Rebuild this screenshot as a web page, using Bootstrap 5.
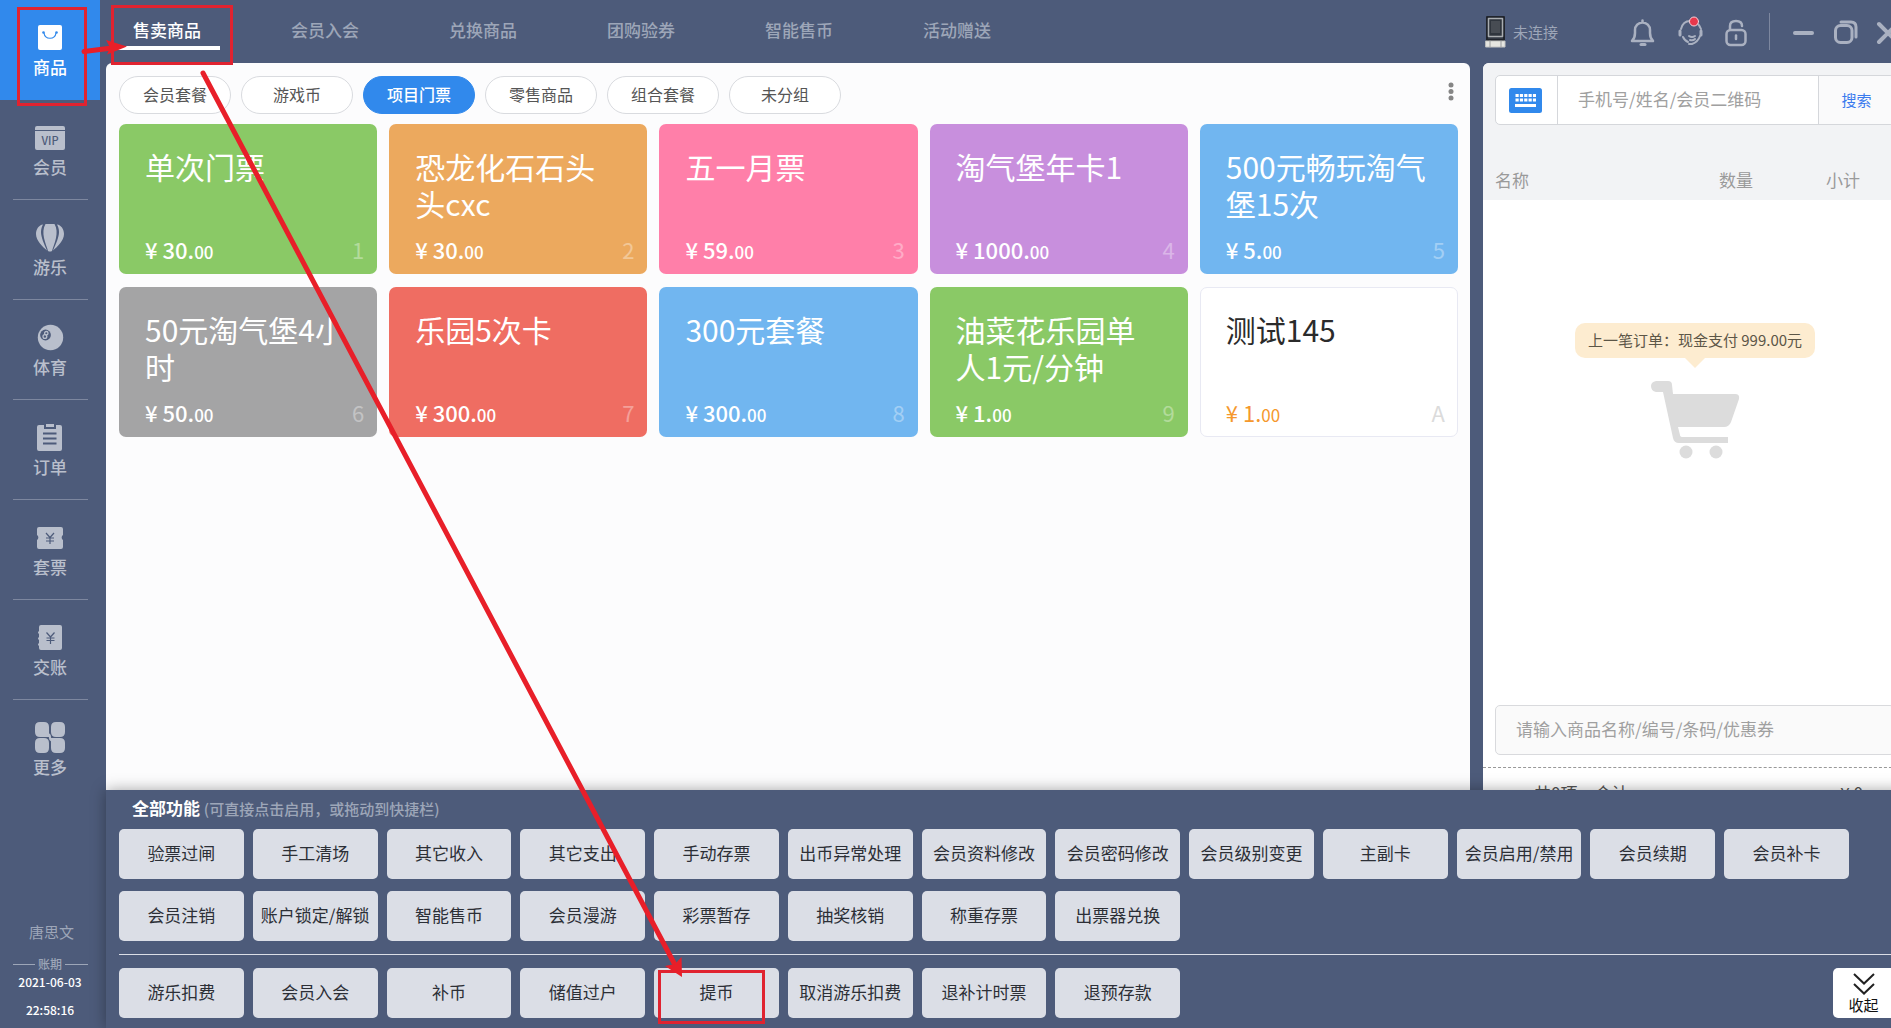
<!DOCTYPE html>
<html lang="zh-CN">
<head>
<meta charset="utf-8">
<meta name="viewport" content="width=device-width, initial-scale=1">
<title>售卖商品</title>
<link href="https://cdn.jsdelivr.net/npm/bootstrap@5.3.0/dist/css/bootstrap.min.css" rel="stylesheet">
<style>
:root{--navy:#4d5b7a;--brand:#3189ec;--mute:#b9bfcc;--dim:#9da6b8}
body{font-family:"Noto Sans CJK SC",sans-serif;font-size:17px;line-height:24px;background:var(--navy);overflow:hidden}
button{font-family:inherit}
.app-shell{width:calc(100% + 16px);height:100vh}
.side-bar{width:100px;color:var(--mute)}
.side-link{height:100px;padding-top:24px;color:var(--mute);text-decoration:none;gap:3px;font-weight:500}
.side-link svg{width:32px;height:28px;fill:currentColor}
.side-link+.side-link::after{content:"";width:75px;height:1px;background:#7d879f;margin-top:auto}
.side-link:last-child::after{visibility:hidden}
.side-link.current{background:var(--brand);color:#fff}
.side-foot{font-weight:500;padding-bottom:8px}
.user-name{font-size:15px;color:var(--dim);font-weight:400;padding-left:3px;margin-bottom:12px}
.period{width:75px;gap:3px;font-size:12px;line-height:16px;color:var(--dim)}
.period::before,.period::after{content:"";flex:1;height:1px;background:var(--dim)}
.shift-date,.shift-time{line-height:20px;font-size:12px;color:#fff}
.shift-time{margin-top:8px}
.main-col{padding-left:6px}
.top-bar{height:63px}
.tab-row{gap:52px;padding:13px 0 0 8px}
.tab-row .nav-link{width:106px;height:37px;padding:5px 0 0;color:var(--dim);text-align:center;border-bottom:4px solid transparent;font-weight:500}
.tab-row .nav-link.active{color:#fff;border-color:#fff}
.status-area{width:424px;padding:4px 6px 4px 2px;color:var(--dim)}
.status-area svg{fill:none;stroke:#aab1c1;stroke-width:3;stroke-linecap:round;stroke-linejoin:round}
.status-text{font-size:15px;margin-left:7px}
.tool-icons{gap:19px}
.win-icons{gap:14px}
.icon-btn{border:0;background:none;padding:0;width:28px;height:32px;line-height:0}
.v-rule{width:1px;height:37px;background:#7d879f}
.work-area{gap:13px}
.goods-pane{background:#fcfcfd;border-radius:6px 6px 0 0;padding:13px 12px 0 13px}
.pill-row{gap:10px;margin-bottom:10px}
.pill{width:112px;height:38px;border:1px solid #d9dbdf;border-radius:19px;background:#fff;color:#555;font-size:16px;padding:0 0 3px}
.pill.on{background:var(--brand);border-color:var(--brand);color:#fff;font-weight:500}
.more-btn{width:20px;height:32px;border:0;background:none;padding:0;margin-right:-3px}
.goods-grid{display:grid;grid-template-columns:repeat(5,1fr);gap:13px 12px}
.goods{height:150px;border:0;border-radius:7px;color:#fff;text-align:left;padding:24px 13px 8px 26px}
.goods-name{font-size:30px;line-height:37px;padding-right:14px;overflow-wrap:anywhere}
.price{font-size:22px;line-height:28px;font-weight:500}
.price span{font-size:17px}
.hot-key{font-size:22px;line-height:28px;opacity:.35}
.g-green{background:#8ac966}.g-orange{background:#eca95e}.g-pink{background:#ff7fa9}.g-purple{background:#c88fdd}.g-blue{background:#71b6f0}.g-grey{background:#a4a4a5}.g-red{background:#ef6d62}
.g-plain{background:#fff;border:1px solid #e8e9f3;color:#2b2b2b;padding:23px 12px 7px 25px}
.g-plain .price{color:#f5982c;font-weight:400}
.g-plain .hot-key{color:#999}
.cart-pane{width:424px;background:#fff;border-radius:6px 6px 0 0}
.cart-head{background:#f2f3f5;height:137px;padding:12px 12px 0;border-radius:6px 6px 0 0}
.find-box{height:50px;border:1px solid #d5d7db;border-radius:5px;background:#fff}
.kbd-btn{width:62px;border:0;border-right:1px solid #d5d7db;background:none;padding:0 2px 0 0}
.find-box input{border:0;min-width:0;padding:0 20px 2px;background:none;outline:0}
::placeholder{color:#a0a0a0;opacity:1}
.find-btn{width:76px;border:0;border-left:1px solid #d5d7db;background:#fafafb;color:#3a7bee;font-size:15px;border-radius:0 5px 5px 0}
.cart-table{margin-top:43px;color:#9a9a9a}
.cart-table th{font-weight:400;padding:0}
.c-num{width:107px}.c-sum{width:69px}
.tip{margin-top:123px;background:#fdecd0;border-radius:10px;width:240px;height:35px;line-height:33px;font-size:15px;color:#5c5647;position:relative}
.tip::after{content:"";position:absolute;left:110px;top:35px;border:10px solid transparent;border-top-color:#fdecd0;border-bottom:0}
.cart-svg{margin-top:22px}
.item-input{margin:0 12px;height:50px;border:1px solid #d9dadd;border-radius:5px;background:#fafafa;padding:0 20px 3px}
.cart-bottom{margin-top:12px;border-top:1px dashed #999;padding:13px 44px 0 51px;color:#555;height:261px}
.drawer{left:106px;right:0;bottom:0;background:var(--navy);box-shadow:0 0 14px rgba(0,0,0,.35);padding:6px 0 10px 13px}
.drawer-title{padding-left:13px;margin-bottom:8px;color:#fff;font-weight:700}
.drawer-title span{font-size:15px;color:var(--dim);font-weight:500}
.fn-grid{display:grid;grid-template-columns:repeat(13,1fr);gap:12px 9px;padding-right:58px}
.fn{height:50px;border:0;border-radius:5px;background:#dbdee6;color:#2c2f36;padding:0 0 3px;white-space:nowrap}
.drawer-rule{height:1px;background:#dbdee6;margin:13px 0}
.fold-btn{right:0;bottom:10px;width:74px;height:50px;border:0;border-radius:5px 0 0 5px;background:#fff;padding:5px 13px 0 0;font-size:15px;line-height:20px;color:#111}
.guide{left:0;top:0;pointer-events:none;z-index:5}
</style>
<script src="https://cdn.jsdelivr.net/npm/bootstrap@5.3.0/dist/js/bootstrap.bundle.min.js"></script>
</head>
<body>
<div class="app-shell d-flex position-relative">
  <aside class="side-bar d-flex flex-column flex-shrink-0">
    <nav class="d-flex flex-column">
      <a href="#" class="side-link current d-flex flex-column align-items-center"><svg viewBox="0 0 32 28"><rect x="4" y="1" width="24" height="25" rx="2"/><path d="M10 9c1 7 11 7 12 0" fill="none" stroke="#3189ec" stroke-width="1.200"/><circle cx="9.500" cy="8.500" r="1.300" fill="#3189ec"/><circle cx="22.500" cy="8.500" r="1.300" fill="#3189ec"/></svg>商品</a>
      <a href="#" class="side-link d-flex flex-column align-items-center"><svg viewBox="0 0 32 28"><path d="M3 2h26q2 0 2 2v2H1V4q0-2 2-2zM1 7h30v17q0 2-2 2H3q-2 0-2-2z"/><text x="16" y="20.500" text-anchor="middle" font-size="11" fill="#4d5b7a">VIP</text></svg>会员</a>
      <a href="#" class="side-link d-flex flex-column align-items-center"><svg viewBox="0 0 32 28"><path d="M9 .5C5 1 2 5 2 10c0 7 7 13 11 16.500C10 20 7 13 7 8c0-3 1-6 2-7.500zM23 .5c4 .5 7 4.500 7 9.500 0 7-7 13-11 16.500C22 20 25 13 25 8c0-3-1-6-2-7.500zM11.500 0h9C23 4 23 9 22 14c-1 5-3 9-4 13q-2 1-4 0c-1-4-3-8-4-13C9 9 9 4 11.500 0z"/></svg>游乐</a>
      <a href="#" class="side-link d-flex flex-column align-items-center"><svg viewBox="0 0 32 28"><circle cx="16.500" cy="13.500" r="12.700"/><circle cx="11.500" cy="11" r="5.400" fill="#4d5b7a"/><g fill="none" stroke="#b9bfcc" stroke-width="1.300"><circle cx="12.300" cy="9.200" r="1.700"/><circle cx="10.900" cy="12.500" r="1.900"/></g></svg>体育</a>
      <a href="#" class="side-link d-flex flex-column align-items-center"><svg viewBox="0 0 32 28"><path d="M12 0h8v3h-8zM5 1h5v4h12V1h4q2 0 2 2v22q0 2-2 2H5q-2 0-2-2V3q0-2 2-2z"/><path d="M9 9.500h13.500M9 14.500h13.500M9 19.500h13.500" stroke="#4d5b7a" stroke-width="2"/></svg>订单</a>
      <a href="#" class="side-link d-flex flex-column align-items-center"><svg viewBox="0 0 32 28"><path d="M5 3h22q2 0 2 2v6a3 3 0 0 0 0 5v7q0 2-2 2H5q-2 0-2-2v-7a3 3 0 0 0 0-5V5q0-2 2-2z"/><path d="M12 9l4 4.500L20 9M12 14h8M12 17h8M16 13.500V20" fill="none" stroke="#4d5b7a" stroke-width="1.200"/></svg>套票</a>
      <a href="#" class="side-link d-flex flex-column align-items-center"><svg viewBox="0 0 32 28"><path d="M7 1h19q2 0 2 2v21q0 2-2 2H7q-2 0-2-2v-2q-2-1.500 0-3v-3q-2-1.500 0-3v-3q-2-1.500 0-3V3q0-2 2-2z"/><path d="M12.500 8.500l4 4.500 4-4.500M12.500 14h8M12.500 16.500h8M16.500 13v7" fill="none" stroke="#4d5b7a" stroke-width="1.200"/></svg>交账</a>
      <a href="#" class="side-link d-flex flex-column align-items-center"><svg viewBox="0 0 32 28" overflow="visible"><path d="M6 -2h4q5 0 5 5v10H6q-5 0-5-5V3q0-5 5-5zM26 13h-4q-5 0-5-5V3q0-5 5-5h4q5 0 5 5v5q0 5-5 5zM6 14h4q5 0 5 5v5q0 5-5 5H6q-5 0-5-5v-5q0-5 5-5zM17 14h9q5 0 5 5v5q0 5-5 5h-4q-5 0-5-5z"/><path d="M12 11q3 0 3 3 0 3 4 4l1-2q-3 0-3-3 0-4-4-4z"/></svg>更多</a>
    </nav>
    <div class="side-foot d-flex flex-column align-items-center mt-auto">
      <div class="user-name">唐思文</div>
      <div class="period d-flex align-items-center">账期</div>
      <div class="shift-date">2021-06-03</div>
      <div class="shift-time">22:58:16</div>
    </div>
  </aside>

  <div class="main-col d-flex flex-column flex-grow-1">
    <header class="top-bar d-flex justify-content-between flex-shrink-0">
      <nav class="tab-row nav flex-nowrap align-items-start">
        <a class="nav-link active" href="#">售卖商品</a>
        <a class="nav-link" href="#">会员入会</a>
        <a class="nav-link" href="#">兑换商品</a>
        <a class="nav-link" href="#">团购验券</a>
        <a class="nav-link" href="#">智能售币</a>
        <a class="nav-link" href="#">活动赠送</a>
      </nav>
      <div class="status-area d-flex align-items-center">
        <svg width="21" height="32" viewBox="0 0 21 32"><path d="M2 1h17v23H2z" fill="#343a44" stroke="#20242c" stroke-width="2"/><path d="M3.500 2.500h14v18h-14z" fill="#2f353d" stroke="#a9adb0" stroke-width="1.500"/><path d="M6 5h9v12H6z" fill="#474c53" stroke="none"/><path d="M1 25h19v6H1z" fill="#e6e6e1" stroke="#c4c5c3" stroke-width="1"/><path d="M5 25v6M16 25v6" stroke="#9a9c9e" stroke-width="1"/></svg>
        <span class="status-text">未连接</span>
        <div class="tool-icons d-flex align-items-center ms-auto">
          <button class="icon-btn" aria-label="通知"><svg width="28" height="32" viewBox="0 0 28 32"><path d="M4 25q3-3 3-8v-3a7.500 7.500 0 0 1 15 0v3q0 5 3 8zM14.500 6V4.500" stroke-width="2.500"/><path d="M13 28.500h4"/></svg></button>
          <button class="icon-btn" aria-label="客服"><svg width="28" height="32" viewBox="0 0 28 32"><path d="M6 13q2-8 9-8 8 0 11 8" stroke-width="2"/><path d="M5 15v4M26 15v4" stroke-width="3"/><path d="M8 21q2 4 5 5M25 20q-2 6-8 8h-3M14 20q3 2 6 0M15 24q3 1 5-1" stroke-width="2"/><circle cx="19" cy="5.500" r="4.500" fill="#e8384c" stroke="#f4d5dc" stroke-width="1"/></svg></button>
          <button class="icon-btn" aria-label="锁定"><svg width="28" height="32" viewBox="0 0 28 32"><rect x="4.500" y="14" width="19" height="15" rx="4" stroke-width="2.500"/><path d="M8 13v-3q0-5 6-5t6 5" stroke-width="2.500"/><path d="M14 19.500v3.500" stroke-width="2.500"/></svg></button>
          <span class="v-rule"></span>
          <div class="win-icons d-flex">
            <button class="icon-btn" aria-label="最小化"><svg width="28" height="32" viewBox="0 0 28 32"><path d="M6 17h17" stroke-width="4"/></svg></button>
            <button class="icon-btn" aria-label="还原"><svg width="28" height="32" viewBox="0 0 28 32"><rect x="4.500" y="9.500" width="16.500" height="17" rx="5"/><path d="M10 6h10q5 0 5 5v10" /></svg></button>
            <button class="icon-btn" aria-label="关闭"><svg width="28" height="32" viewBox="0 0 28 32"><path d="M6 8l18 18M24 8L6 26" stroke-width="4"/></svg></button>
          </div>
        </div>
      </div>
    </header>

    <div class="work-area d-flex flex-grow-1">
      <main class="goods-pane flex-grow-1">
        <div class="pill-row d-flex align-items-start">
          <button class="pill">会员套餐</button>
          <button class="pill">游戏币</button>
          <button class="pill on">项目门票</button>
          <button class="pill">零售商品</button>
          <button class="pill">组合套餐</button>
          <button class="pill">未分组</button>
          <button class="more-btn ms-auto" aria-label="更多"><svg width="20" height="32" viewBox="0 0 20 32" fill="#858585"><circle cx="10" cy="9" r="2.500"/><circle cx="10" cy="15.500" r="2.500"/><circle cx="10" cy="22" r="2.500"/></svg></button>
        </div>
        <div class="goods-grid">
          <button class="goods g-green d-flex flex-column"><span class="goods-name">单次门票</span><span class="d-flex w-100 justify-content-between mt-auto"><span class="price">¥ 30.<span>00</span></span><span class="hot-key">1</span></span></button>
          <button class="goods g-orange d-flex flex-column"><span class="goods-name">恐龙化石石头头cxc</span><span class="d-flex w-100 justify-content-between mt-auto"><span class="price">¥ 30.<span>00</span></span><span class="hot-key">2</span></span></button>
          <button class="goods g-pink d-flex flex-column"><span class="goods-name">五一月票</span><span class="d-flex w-100 justify-content-between mt-auto"><span class="price">¥ 59.<span>00</span></span><span class="hot-key">3</span></span></button>
          <button class="goods g-purple d-flex flex-column"><span class="goods-name">淘气堡年卡1</span><span class="d-flex w-100 justify-content-between mt-auto"><span class="price">¥ 1000.<span>00</span></span><span class="hot-key">4</span></span></button>
          <button class="goods g-blue d-flex flex-column"><span class="goods-name">500元畅玩淘气堡15次</span><span class="d-flex w-100 justify-content-between mt-auto"><span class="price">¥ 5.<span>00</span></span><span class="hot-key">5</span></span></button>
          <button class="goods g-grey d-flex flex-column"><span class="goods-name">50元淘气堡4小时</span><span class="d-flex w-100 justify-content-between mt-auto"><span class="price">¥ 50.<span>00</span></span><span class="hot-key">6</span></span></button>
          <button class="goods g-red d-flex flex-column"><span class="goods-name">乐园5次卡</span><span class="d-flex w-100 justify-content-between mt-auto"><span class="price">¥ 300.<span>00</span></span><span class="hot-key">7</span></span></button>
          <button class="goods g-blue d-flex flex-column"><span class="goods-name">300元套餐</span><span class="d-flex w-100 justify-content-between mt-auto"><span class="price">¥ 300.<span>00</span></span><span class="hot-key">8</span></span></button>
          <button class="goods g-green d-flex flex-column"><span class="goods-name">油菜花乐园单人1元/分钟</span><span class="d-flex w-100 justify-content-between mt-auto"><span class="price">¥ 1.<span>00</span></span><span class="hot-key">9</span></span></button>
          <button class="goods g-plain d-flex flex-column"><span class="goods-name">测试145</span><span class="d-flex w-100 justify-content-between mt-auto"><span class="price">¥ 1.<span>00</span></span><span class="hot-key">A</span></span></button>
        </div>
      </main>

      <section class="cart-pane d-flex flex-column flex-shrink-0">
        <div class="cart-head flex-shrink-0">
          <div class="find-box d-flex">
            <button class="kbd-btn" aria-label="键盘"><svg width="33" height="25" viewBox="0 0 33 25"><rect width="33" height="25" rx="2.500" fill="#3189ec"/><path d="M6.500 7.500h20.500M6.500 12h20.500" stroke="#fff" stroke-width="3" stroke-dasharray="3.200 1.150"/><path d="M6 17.500h21" stroke="#fff" stroke-width="3"/></svg></button>
            <input class="flex-grow-1" type="text" aria-label="会员查询" placeholder="手机号/姓名/会员二维码">
            <button class="find-btn">搜索</button>
          </div>
          <table class="cart-table w-100"><thead><tr><th scope="col">名称</th><th scope="col" class="c-num">数量</th><th scope="col" class="c-sum">小计</th></tr></thead></table>
        </div>
        <div class="tip align-self-center text-center">上一笔订单：现金支付 999.00元</div>
        <svg class="cart-svg align-self-center" width="90" height="80" viewBox="0 0 90 80" fill="#dcdcdc"><path d="M6 1h12q4 0 4 4l1 9h62q5 0 4 5l-8 23q-2 5-7 5H28l2 8q0 2 3 2h45v6H29q-5 0-6-5L13 12H6Q1 11 1 6q0-4 5-5z"/><circle cx="36" cy="72" r="6.500"/><circle cx="66" cy="72" r="6.500"/></svg>
        <input class="item-input mt-auto flex-shrink-0" type="text" aria-label="商品查询" placeholder="请输入商品名称/编号/条码/优惠券">
        <div class="cart-bottom d-flex justify-content-between flex-shrink-0"><span>共0项，合计</span><span>¥ 0</span></div>
      </section>
    </div>
  </div>

  <section class="drawer position-absolute">
    <div class="drawer-title">全部功能 <span>(可直接点击启用，或拖动到快捷栏)</span></div>
    <div class="fn-grid">
      <button class="fn">验票过闸</button><button class="fn">手工清场</button><button class="fn">其它收入</button><button class="fn">其它支出</button><button class="fn">手动存票</button><button class="fn">出币异常处理</button><button class="fn">会员资料修改</button><button class="fn">会员密码修改</button><button class="fn">会员级别变更</button><button class="fn">主副卡</button><button class="fn">会员启用/禁用</button><button class="fn">会员续期</button><button class="fn">会员补卡</button>
      <button class="fn">会员注销</button><button class="fn">账户锁定/解锁</button><button class="fn">智能售币</button><button class="fn">会员漫游</button><button class="fn">彩票暂存</button><button class="fn">抽奖核销</button><button class="fn">称重存票</button><button class="fn">出票器兑换</button>
    </div>
    <div class="drawer-rule"></div>
    <div class="fn-grid">
      <button class="fn">游乐扣费</button><button class="fn">会员入会</button><button class="fn">补币</button><button class="fn">储值过户</button><button class="fn">提币</button><button class="fn">取消游乐扣费</button><button class="fn">退补计时票</button><button class="fn">退预存款</button>
    </div>
    <button class="fold-btn position-absolute d-flex flex-column align-items-center"><svg class="flex-shrink-0" width="22" height="22" viewBox="0 0 22 22" fill="none" stroke="#222" stroke-width="2"><path d="M1 1l10 9.500L21 1M1 11l10 9.500L21 11"/></svg><span>收起</span></button>
  </section>

  <svg class="guide position-absolute" width="1891" height="1028" viewBox="0 0 1891 1028" fill="none" stroke="#e02330" stroke-width="3">
    <rect x="18.500" y="8.500" width="67" height="96"/>
    <rect x="112.500" y="6.500" width="119" height="57"/>
    <rect x="659.500" y="971.500" width="104" height="51"/>
    <g stroke="#e81f29" stroke-width="5" stroke-linecap="round"><path d="M84 51.500L112 48M203 73L674 963"/></g>
    <path d="M127 46.500L106 40l4 7.500-3 7zM682 977l-17-11 10-2 6.500-7z" fill="#e81f29" stroke="none"/>
  </svg>
</div>
</body>
</html>
